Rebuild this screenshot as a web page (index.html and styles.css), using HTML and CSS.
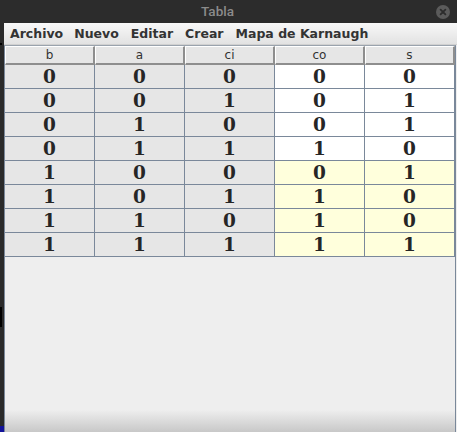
FILE: index.html
```html
<!DOCTYPE html>
<html lang="es">
<head>
<meta charset="utf-8">
<title>Tabla</title>
<link rel="stylesheet" href="styles.css">
</head>
<body>
<div class="screen">
  <div class="titlebar">
    <span class="title">Tabla</span>
    <span class="close">
      <svg width="14" height="14" viewBox="0 0 14 14"><circle cx="7" cy="7" r="7" fill="#5b5b5b"/><path d="M4.6 4.6 L9.4 9.4 M9.4 4.6 L4.6 9.4" stroke="#2c2c2c" stroke-width="1.8" stroke-linecap="round"/></svg>
    </span>
  </div>
  <div class="body">
    <div class="edge">
      <div class="edge-gap1"></div>
      <div class="edge-mark"></div>
      <div class="edge-gap2"></div>
      <div class="edge-mark tall"></div>
      <div class="edge-fill"></div>
      <div class="edge-blue"></div>
    </div>
    <div class="window">
      <div class="menubar">
        <span class="menu">Archivo</span>
        <span class="menu">Nuevo</span>
        <span class="menu">Editar</span>
        <span class="menu">Crear</span>
        <span class="menu">Mapa de Karnaugh</span>
      </div>
      <div class="pane">
        <div class="row head">
          <div class="hcell">b</div><div class="hcell">a</div><div class="hcell">ci</div><div class="hcell">co</div><div class="hcell">s</div>
        </div>
        <div class="row"><div class="cell in">0</div><div class="cell in">0</div><div class="cell in">0</div><div class="cell out">0</div><div class="cell out">0</div></div>
        <div class="row"><div class="cell in">0</div><div class="cell in">0</div><div class="cell in">1</div><div class="cell out">0</div><div class="cell out">1</div></div>
        <div class="row"><div class="cell in">0</div><div class="cell in">1</div><div class="cell in">0</div><div class="cell out">0</div><div class="cell out">1</div></div>
        <div class="row"><div class="cell in">0</div><div class="cell in">1</div><div class="cell in">1</div><div class="cell out">1</div><div class="cell out">0</div></div>
        <div class="row"><div class="cell in">1</div><div class="cell in">0</div><div class="cell in">0</div><div class="cell hl">0</div><div class="cell hl">1</div></div>
        <div class="row"><div class="cell in">1</div><div class="cell in">0</div><div class="cell in">1</div><div class="cell hl">1</div><div class="cell hl">0</div></div>
        <div class="row"><div class="cell in">1</div><div class="cell in">1</div><div class="cell in">0</div><div class="cell hl">1</div><div class="cell hl">0</div></div>
        <div class="row"><div class="cell in">1</div><div class="cell in">1</div><div class="cell in">1</div><div class="cell hl">1</div><div class="cell hl">1</div></div>
        <div class="fill"></div>
      </div>
    </div>
  </div>
</div>
</body>
</html>
```

FILE: styles.css
```css
* { box-sizing: border-box; }
html, body { margin: 0; padding: 0; }
body { background: #2c2c2c; width: 457px; height: 432px; overflow: hidden; }

.screen { width: 457px; height: 432px; display: flex; flex-direction: column; }

.titlebar {
  height: 23px;
  flex: none;
  background: #2c2c2c;
  display: flex;
  align-items: center;
  padding-left: 201px;
  padding-right: 7px;
}
.title {
  font-family: Roboto, "Liberation Sans", sans-serif;
  font-weight: 500;
  font-size: 13.5px;
  color: #8b8b8b;
  line-height: 23px;
  flex: 1;
}
.close { display: flex; width: 14px; height: 14px; margin-top: 1px; }

.body { flex: 1; display: flex; min-height: 0; }

.edge { width: 4px; flex: none; display: flex; flex-direction: column; background: #2a2a2a; }
.edge-gap1 { height: 20px; }
.edge-mark { height: 2px; width: 2px; background: #000; }
.edge-mark.tall { height: 20px; }
.edge-gap2 { height: 262px; }
.edge-fill { flex: 1; }
.edge-blue { height: 6px; background: #12129a; }

.window { width: 453px; flex: none; display: flex; flex-direction: column; background: #eeeeee; }

.menubar {
  height: 22px;
  flex: none;
  display: flex;
  background: linear-gradient(#f8f8f8, #e2e2e2);
  border-bottom: 1px solid #d0d0d0;
  font-family: "DejaVu Sans", sans-serif;
  font-weight: bold;
  font-size: 12.5px;
  line-height: 21px;
  color: #333333;
}
.menu { padding: 0 6px; white-space: nowrap; }
.menu:first-child { padding-right: 5px; }

.pane {
  width: 452px;
  flex: 1;
  display: flex;
  flex-direction: column;
  border-top: 1px solid #9aa3ad;
  border-left: 1px solid #7a889a;
  border-right: 1px solid #7a889a;
  background: #eeeeee;
}

.row { display: grid; grid-template-columns: repeat(5, 90px); height: 24px; flex: none; }
.row.head { height: 19px; }

.hcell {
  background: #e6e6e6;
  border-top: 1px solid #ffffff;
  border-left: 1px solid #ffffff;
  border-right: 2px solid #8e8e8e;
  border-bottom: 2px solid #8e8e8e;
  font-family: "DejaVu Sans", sans-serif;
  font-size: 12px;
  line-height: 16px;
  color: #333333;
  text-align: center;
}

.cell {
  border-right: 1px solid #7a889a;
  border-bottom: 1px solid #7a889a;
  font-family: "DejaVu Serif", serif;
  font-weight: bold;
  font-size: 18.5px;
  line-height: 23px;
  color: #262626;
  text-align: center;
}
.cell.in { background: #e6e6e6; }
.cell.out { background: #ffffff; }
.cell.hl { background: #ffffdc; }

.fill {
  flex: 1;
  background: linear-gradient(to bottom, #eeeeee calc(100% - 22px), #c8c8c8);
}
```
